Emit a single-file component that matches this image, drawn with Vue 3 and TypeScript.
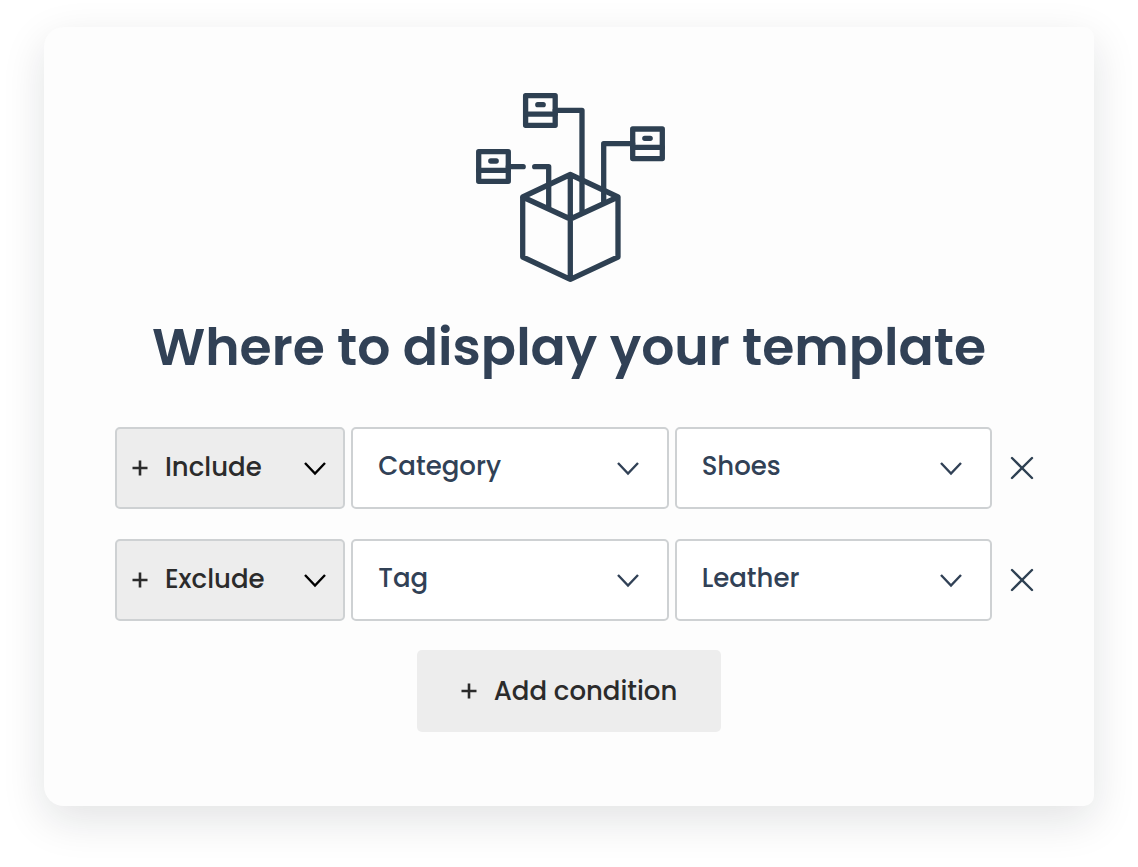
<script setup lang="ts">
import { ref } from 'vue'

interface Condition {
  id: number
  mode: string
  field: string
  value: string
}

const modes = ['Include', 'Exclude']
const fields = ['Category', 'Tag']
const values = ['Shoes', 'Leather']

const conditions = ref<Condition[]>([
  { id: 1, mode: 'Include', field: 'Category', value: 'Shoes' },
  { id: 2, mode: 'Exclude', field: 'Tag', value: 'Leather' },
])

let nextId = 3

function addCondition(): void {
  conditions.value.push({ id: nextId++, mode: 'Include', field: 'Category', value: 'Shoes' })
}

function removeCondition(id: number): void {
  conditions.value = conditions.value.filter((c) => c.id !== id)
}
</script>

<template>
  <main class="page">
    <section class="card">
      <svg class="art" viewBox="0 0 192 192" aria-hidden="true">
        <rect x="52.6" y="3.7" width="29.6" height="29.6" />
        <path d="M52.6 22.1H82.2M64.8 12.7H70.2" />
        <rect x="5.7" y="59.7" width="29.6" height="29.6" />
        <path d="M5.7 78.4H35.3M17.8 69H23.2" />
        <rect x="159.7" y="37" width="29.6" height="29.6" />
        <path d="M159.7 55.4H189.3M171.8 46.3H177.2" />
        <path d="M82.2 18.3H109V120" />
        <path d="M159.7 51.7H130.7V110" />
        <path d="M35.3 74.7H50.2M61.7 74.7H75.7V116" />
        <path d="M97.3 82.5L145 105V165L97.3 187.3L49.7 165V105ZM49.7 105L97.3 127L145 105M97.3 82.5V187.3" />
      </svg>

      <h1 class="title">Where to display your template</h1>

      <div class="rows">
        <div v-for="c in conditions" :key="c.id" class="row">
          <div class="field field-mode">
            <svg class="plus" viewBox="0 0 16 16" aria-hidden="true"><path d="M8 0.5V15.5M0.5 8H15.5" /></svg>
            <select v-model="c.mode" aria-label="Rule">
              <option v-for="m in modes" :key="m">{{ m }}</option>
            </select>
            <svg class="chevron" viewBox="0 0 24 24" aria-hidden="true"><path d="M2 7L12 17.5L22 7" /></svg>
          </div>
          <div class="field">
            <select v-model="c.field" aria-label="Condition type">
              <option v-for="f in fields" :key="f">{{ f }}</option>
            </select>
            <svg class="chevron" viewBox="0 0 24 24" aria-hidden="true"><path d="M2 7L12 17.5L22 7" /></svg>
          </div>
          <div class="field">
            <select v-model="c.value" aria-label="Condition value">
              <option v-for="v in values" :key="v">{{ v }}</option>
            </select>
            <svg class="chevron" viewBox="0 0 24 24" aria-hidden="true"><path d="M2 7L12 17.5L22 7" /></svg>
          </div>
          <button class="remove" type="button" aria-label="Remove condition" @click="removeCondition(c.id)">
            <svg viewBox="0 0 24 24" aria-hidden="true"><path d="M2 2L22 22M22 2L2 22" /></svg>
          </button>
        </div>
      </div>

      <button class="add" type="button" @click="addCondition">
        <svg class="plus" viewBox="0 0 16 16" aria-hidden="true"><path d="M8 0.5V15.5M0.5 8H15.5" /></svg>
        <span>Add condition</span>
      </button>
    </section>
  </main>
</template>

<style>
body {
  margin: 0;
  background: #fff;
}
</style>

<style scoped>
.page {
  box-sizing: border-box;
  padding: 27px 44px 61px;
  overflow: hidden;
  font-family: Poppins, Inter, "Liberation Sans", sans-serif;
}

.card {
  display: flex;
  flex-direction: column;
  align-items: center;
  box-sizing: border-box;
  padding: 65px 60px 74px;
  border-radius: 20px 10px 10px 20px;
  background: #fdfdfd;
  box-shadow: 0 14px 44px rgba(20, 22, 35, 0.12);
}

.art {
  width: 192px;
  height: 192px;
  fill: none;
  stroke: #2e4052;
  stroke-width: 5.3;
  stroke-linecap: round;
  stroke-linejoin: round;
}

.title {
  margin: 24px 0 41px;
  color: #314156;
  font-size: 52px;
  font-weight: 600;
  line-height: 78px;
  text-align: center;
}

.rows {
  display: grid;
  gap: 30px;
  align-self: stretch;
  padding-left: 11px;
}

.row {
  display: grid;
  grid-template-columns: 230fr 317fr 317fr 36px;
  gap: 6px;
  align-items: center;
}

.field {
  display: grid;
  grid-template-columns: minmax(0, 1fr) auto;
  align-items: center;
  box-sizing: border-box;
  height: 82px;
  border: 2px solid #ced1d3;
  border-radius: 5px;
  background: #fff;
  color: #314156;
}

.field select {
  grid-area: 1 / 1 / 2 / -1;
  width: 100%;
  height: 100%;
  padding: 0 60px 4px 25px;
  border: 0;
  background: transparent;
  color: inherit;
  font: 500 26px/40px Poppins, Inter, "Liberation Sans", sans-serif;
  appearance: none;
  cursor: pointer;
}

.field-mode {
  background: #ededed;
  color: #2b2b2b;
}

.field-mode select {
  padding: 0 50px 2px 48px;
}

.chevron {
  grid-area: 1 / 2;
  width: 24px;
  height: 24px;
  margin-right: 27px;
  fill: none;
  stroke: #314156;
  stroke-width: 2.4;
  pointer-events: none;
}

.field-mode .chevron {
  margin-right: 16px;
  stroke: #000;
}

.plus {
  width: 16px;
  height: 16px;
  fill: none;
  stroke: #2b2b2b;
  stroke-width: 2.6;
  pointer-events: none;
}

.field-mode .plus {
  grid-area: 1 / 1;
  margin-left: 15px;
}

.remove {
  display: grid;
  justify-content: end;
  padding: 0;
  border: 0;
  background: transparent;
  cursor: pointer;
}

.remove svg {
  width: 24px;
  height: 24px;
  fill: none;
  stroke: #2e4052;
  stroke-width: 2.4;
  stroke-linecap: round;
}

.add {
  display: flex;
  align-items: center;
  justify-content: center;
  gap: 17px;
  min-width: 304px;
  height: 82px;
  margin-top: 29px;
  padding: 0 40px;
  border: 0;
  border-radius: 5px;
  background: #ededed;
  color: #2b2b2b;
  font: 500 26px/40px Poppins, Inter, "Liberation Sans", sans-serif;
  cursor: pointer;
}
</style>
